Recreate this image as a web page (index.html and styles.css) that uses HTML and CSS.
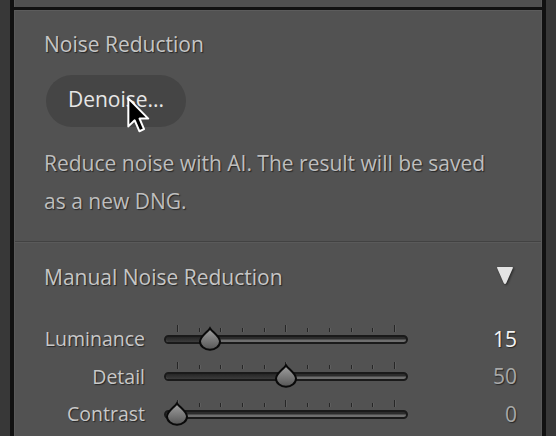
FILE: index.html
```html
<!DOCTYPE html>
<html>
<head>
<meta charset="utf-8">
<link rel="stylesheet" href="styles.css">
</head>
<body>
<div class="frame">
  <div class="prev-panel"></div>
  <div class="divider"></div>
  <section class="panel">
    <h2 class="title">Noise Reduction</h2>
    <div class="btn-wrap">
      <button class="pill">Denoise...</button>
      <svg class="cursor" width="28" height="39" viewBox="0 0 18 25">
        <path d="M1.5 1.5 L1.5 19.5 L5.6 15.6 L8.6 22.6 L11.6 21.3 L8.7 14.5 L14.3 14.5 Z" fill="#000" stroke="#fff" stroke-width="1.3" stroke-linejoin="round"/>
      </svg>
    </div>
    <p class="desc">Reduce noise with AI. The result will be saved<br>as a new DNG.</p>
    <div class="sep"></div>
    <div class="sub-head">
      <h3 class="title">Manual Noise Reduction</h3>
      <svg class="tri" width="18" height="19" viewBox="0 0 18 19">
        <path d="M1.8 1.8 L16.2 1.8 L9.6 16.6 Q9 17.7 8.4 16.6 Z" fill="#e4e4e4" stroke="#e4e4e4" stroke-width="1.5" stroke-linejoin="round"/>
      </svg>
    </div>
    <svg class="defs" width="0" height="0"><defs><linearGradient id="g1" x1="0" y1="0" x2="0" y2="1"><stop offset="0" stop-color="#a2a2a2"/><stop offset="1" stop-color="#565656"/></linearGradient></defs></svg>
    <div class="sliders">
      <div class="row">
        <span class="label">Luminance</span>
        <div class="slider">
          <div class="ticks"><i class="tall"></i><i></i><i></i><i></i><i></i><i class="tall"></i><i></i><i></i><i></i><i></i><i class="tall"></i></div>
          <div class="track"><div class="fill" style="width:calc(13px + 15% * 218 / 244)"></div></div>
          <div class="rail">
            <svg class="thumb" style="left:15%" width="24" height="24" viewBox="0 0 24 24"><path d="M12 1.2 C14 4.8 22 9.5 22 14.5 A10 8.2 0 0 1 2 14.5 C2 9.5 10 4.8 12 1.2 Z" fill="url(#g1)" stroke="#0a0a0a" stroke-width="2"/></svg>
          </div>
        </div>
        <span class="value active">15</span>
      </div>
      <div class="row">
        <span class="label">Detail</span>
        <div class="slider">
          <div class="ticks"><i class="tall"></i><i></i><i></i><i></i><i></i><i class="tall"></i><i></i><i></i><i></i><i></i><i class="tall"></i></div>
          <div class="track"><div class="fill" style="width:calc(13px + 50% * 218 / 244)"></div></div>
          <div class="rail">
            <svg class="thumb" style="left:50%" width="24" height="24" viewBox="0 0 24 24"><path d="M12 1.2 C14 4.8 22 9.5 22 14.5 A10 8.2 0 0 1 2 14.5 C2 9.5 10 4.8 12 1.2 Z" fill="url(#g1)" stroke="#0a0a0a" stroke-width="2"/></svg>
          </div>
        </div>
        <span class="value">50</span>
      </div>
      <div class="row">
        <span class="label">Contrast</span>
        <div class="slider">
          <div class="ticks"><i class="tall"></i><i></i><i></i><i></i><i></i><i class="tall"></i><i></i><i></i><i></i><i></i><i class="tall"></i></div>
          <div class="track"><div class="fill" style="width:13px"></div></div>
          <div class="rail">
            <svg class="thumb" style="left:0%" width="24" height="24" viewBox="0 0 24 24"><path d="M12 1.2 C14 4.8 22 9.5 22 14.5 A10 8.2 0 0 1 2 14.5 C2 9.5 10 4.8 12 1.2 Z" fill="url(#g1)" stroke="#0a0a0a" stroke-width="2"/></svg>
          </div>
        </div>
        <span class="value">0</span>
      </div>
    </div>
  </section>
</div>
</body>
</html>
```
FILE: styles.css
```css
* { box-sizing: border-box; }
html, body { margin: 0; padding: 0; }
body {
  background: #383838;
  width: 556px;
  height: 436px;
  overflow: hidden;
  font-family: "Open Sans", "Liberation Sans", sans-serif;
}
.frame {
  margin: 0 10px;
  border-left: 4px solid #111;
  border-right: 4px solid #111;
  height: 436px;
  display: flex;
  flex-direction: column;
}
.prev-panel {
  height: 7px;
  background: #505050;
  border-left: 1px solid #5a5a5a;
  border-right: 1px solid #5a5a5a;
}
.divider { height: 3px; background: #111; }
.panel {
  flex: 1;
  background: #525252;
  border-top: 1px solid #5c5c5c;
  border-left: 1px solid #5a5a5a;
  border-right: 1px solid #5a5a5a;
  padding: 20px 24px 0 29px;
  display: flex;
  flex-direction: column;
}
.defs { position: absolute; }
.title {
  margin: 0;
  font-size: 21px;
  font-weight: 400;
  line-height: 26px;
  color: #c6c6c6;
  text-shadow: 1px 1px 1px #262626;
  white-space: nowrap;
}
.btn-wrap {
  position: relative;
  margin-top: 18px;
  height: 52px;
}
.pill {
  margin-left: 2px;
  width: 140px;
  height: 52px;
  border: none;
  border-radius: 26px;
  background: #454545;
  color: #e6e6e6;
  font-family: inherit;
  font-size: 21px;
  padding: 0 0 4px;
}
.cursor {
  position: absolute;
  left: 82px;
  top: 21px;
}
.desc {
  margin: 17px 0 0;
  font-size: 21px;
  line-height: 38px;
  color: #bebebe;
  text-shadow: 1px 1px 1px #262626;
  white-space: nowrap;
}
.sep {
  margin: 21px -24px 0 -29px;
  height: 2px;
  border-top: 1px solid #424242;
  border-bottom: 1px solid #5a5a5a;
}
.sub-head {
  margin-top: 21px;
  display: flex;
  justify-content: space-between;
  align-items: center;
}
.tri {
  margin-right: 3px;
  margin-top: -3px;
  filter: drop-shadow(1px 1px 1px #262626);
}
.sliders {
  margin-top: 30px;
  display: flex;
  flex-direction: column;
}
.row {
  display: grid;
  grid-template-columns: 101px 244px 1fr;
  column-gap: 19px;
  align-items: center;
  height: 37.5px;
}
.label {
  text-align: right;
  font-size: 19.5px;
  color: #c8c8c8;
  text-shadow: 1px 1px 1px #262626;
  white-space: nowrap;
}
.value {
  text-align: right;
  font-size: 21px;
  color: #a8a8a8;
  text-shadow: 1px 1px 1px #262626;
  margin-left: -19px;
}
.value.active { color: #f4f4f4; }
.slider {
  position: relative;
  height: 30px;
}
.ticks {
  position: absolute;
  left: 13px;
  right: 13px;
  top: 1px;
  height: 7px;
  display: flex;
  justify-content: space-between;
  align-items: flex-end;
}
.ticks i {
  width: 1px;
  height: 4px;
  background: #262626;
  box-shadow: 1px 0 0 #5e5e5e;
}
.ticks i.tall { height: 7px; }
.track {
  position: absolute;
  left: 0;
  right: 0;
  top: 11px;
  height: 9px;
  border: 2px solid #1a1a1a;
  border-radius: 5px;
  background: linear-gradient(#2c2c2c 0 30%, #6e6e6e 70%);
  overflow: hidden;
}
.fill {
  height: 100%;
  background: linear-gradient(#262626, #3c3c3c);
}
.rail {
  position: absolute;
  left: 13px;
  right: 13px;
  top: 3px;
  height: 24px;
}
.thumb {
  position: absolute;
  top: 0;
  margin-left: -12px;
  overflow: visible;
}
```
